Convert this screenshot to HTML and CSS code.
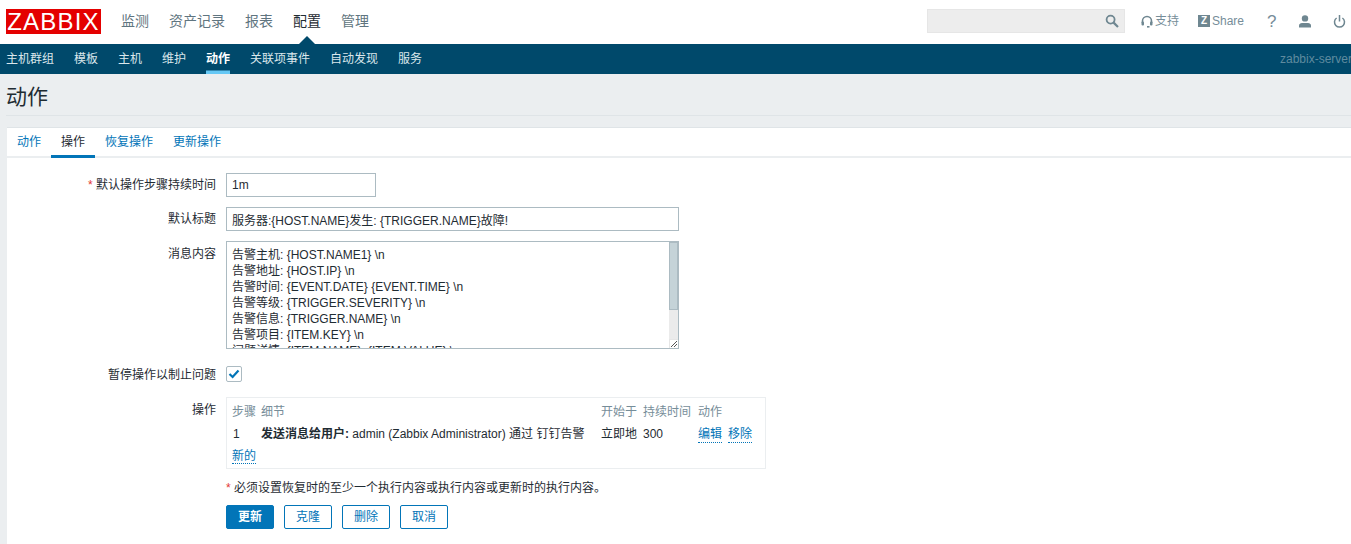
FILE: index.html
```html
<!DOCTYPE html>
<html lang="zh-CN">
<head>
<meta charset="utf-8">
<title>动作</title>
<link rel="stylesheet" href="styles.css">
</head>
<body>
<div class="page">
  <header class="topbar">
    <a class="logo">ZABBIX</a>
    <nav class="mainnav">
      <a>监测</a><a>资产记录</a><a>报表</a><a class="active">配置</a><a>管理</a>
    </nav>
    <div class="tools">
      <div class="search">
        <svg class="search-icon" width="14" height="14" viewBox="0 0 14 14"><circle cx="5.6" cy="5.6" r="4" fill="none" stroke="#6f8791" stroke-width="1.8"/><path d="M8.6 8.6 L13 13" stroke="#6f8791" stroke-width="2.2"/></svg>
      </div>
      <a class="tool support"><svg width="12" height="13" viewBox="0 0 12 13"><path d="M1.5 8 V6 a4.5 4.5 0 0 1 9 0 V8" fill="none" stroke="#6f8791" stroke-width="1.6"/><rect x="0.5" y="6.5" width="2.5" height="4" rx="1" fill="#6f8791"/><rect x="9" y="6.5" width="2.5" height="4" rx="1" fill="#6f8791"/><rect x="6" y="11" width="2.5" height="1.6" fill="#6f8791"/></svg>支持</a>
      <a class="tool share"><span class="zbox">Z</span>Share</a>
      <a class="tool help">?</a>
      <a class="tool user"><svg width="14" height="13" viewBox="0 0 14 13"><circle cx="7" cy="3.4" r="3.2" fill="#6f8791"/><path d="M1 12.5 V10.5 Q1 8.5 4 8 H10 Q13 8.5 13 10.5 V12.5 Z" fill="#6f8791"/></svg></a>
      <a class="tool power"><svg width="13" height="13" viewBox="0 0 13 13"><path d="M3.6 3 A5 5 0 1 0 9.4 3" fill="none" stroke="#6f8791" stroke-width="1.5"/><path d="M6.5 0 V6.5" stroke="#6f8791" stroke-width="1.5"/></svg></a>
    </div>
  </header>
  <nav class="subnav">
    <a>主机群组</a><a>模板</a><a>主机</a><a>维护</a><a class="active">动作</a><a>关联项事件</a><a>自动发现</a><a>服务</a>
    <span class="server">zabbix-server</span>
  </nav>
  <div class="titlebar"><h1>动作</h1></div>
  <main class="panel">
    <div class="tabs">
      <a>动作</a><a class="active">操作</a><a>恢复操作</a><a>更新操作</a>
    </div>
    <form class="form">
      <div class="row">
        <label class="label"><span class="req">*</span> 默认操作步骤持续时间</label>
        <input class="input short" type="text" value="1m">
      </div>
      <div class="row">
        <label class="label">默认标题</label>
        <input class="input wide" type="text" value="服务器:{HOST.NAME}发生: {TRIGGER.NAME}故障!">
      </div>
      <div class="row">
        <label class="label nudge">消息内容</label>
        <div class="textwrap">
          <textarea class="textarea" readonly>告警主机: {HOST.NAME1} \n
告警地址: {HOST.IP} \n
告警时间: {EVENT.DATE} {EVENT.TIME} \n
告警等级: {TRIGGER.SEVERITY} \n
告警信息: {TRIGGER.NAME} \n
告警项目: {ITEM.KEY} \n
问题详情: {ITEM.NAME}: {ITEM.VALUE} \n
当前状态: {TRIGGER.STATUS} \n
事件 ID: {EVENT.ID} \n
</textarea>
          <div class="scrolltrack"><div class="scrollthumb"></div></div>
          <div class="resizer"><svg width="8" height="8" viewBox="0 0 8 8"><path d="M1 7 L7 1 M4 7 L7 4" stroke="#555" stroke-width="1"/></svg></div>
        </div>
      </div>
      <div class="row check-row">
        <label class="label">暂停操作以制止问题</label>
        <span class="checkbox"><svg width="12" height="10" viewBox="0 0 12 10"><path d="M1.5 5 L4.6 8 L10.5 1.5" fill="none" stroke="#0275b8" stroke-width="2.2"/></svg></span>
      </div>
      <div class="row">
        <label class="label nudge">操作</label>
        <div class="ops">
          <table>
            <colgroup><col class="c1"><col class="c2"><col class="c3"><col class="c4"><col class="c5"></colgroup>
            <thead>
              <tr><th>步骤</th><th>细节</th><th>开始于</th><th>持续时间</th><th>动作</th></tr>
            </thead>
            <tbody>
              <tr>
                <td class="step">1</td>
                <td><b>发送消息给用户:</b> admin (Zabbix Administrator) 通过 钉钉告警</td>
                <td>立即地</td>
                <td>300</td>
                <td><div class="actions"><a class="dotted">编辑</a><a class="dotted">移除</a></div></td>
              </tr>
              <tr><td colspan="5"><a class="dotted">新的</a></td></tr>
            </tbody>
          </table>
        </div>
      </div>
      <div class="row">
        <span class="label"></span>
        <p class="note"><span class="req">*</span> 必须设置恢复时的至少一个执行内容或执行内容或更新时的执行内容。</p>
      </div>
      <div class="row">
        <span class="label"></span>
        <div class="buttons">
          <button type="button" class="btn primary">更新</button>
          <button type="button" class="btn">克隆</button>
          <button type="button" class="btn">删除</button>
          <button type="button" class="btn">取消</button>
        </div>
      </div>
    </form>
  </main>
</div>
</body>
</html>
```
FILE: styles.css
```css
* { box-sizing: border-box; }
html, body { margin: 0; padding: 0; height: 100%; overflow: hidden; background: #ebeef0; }
body { font: 12px/16px "Liberation Sans", "Noto Sans CJK SC", sans-serif; color: #1f2c33; }
.page { width: 1360px; height: 544px; overflow: hidden; }

.topbar { display: flex; align-items: flex-start; height: 44px; background: #fff; padding-left: 6px; width: 1351px; }
.logo { display: block; width: 95px; height: 25px; margin-top: 9px; background: #e40000; color: #fff; font-size: 24px; line-height: 25px; text-align: center; letter-spacing: 1.2px; }
.mainnav { display: flex; gap: 20px; margin-left: 20px; font-size: 14px; position: relative; }
.mainnav a { color: #5f7580; line-height: 42px; height: 44px; position: relative; }
.mainnav a.active { color: #1f2c33; }
.mainnav a.active::after { content: ""; position: absolute; left: 50%; bottom: 0; margin-left: -8px; border: 8px solid transparent; border-top: 0; border-bottom-color: #00496b; }

.tools { display: flex; align-items: center; margin-left: auto; height: 42px; }
.search { width: 198px; height: 24px; background: #ededed; border: 1px solid #e6e6e6; display: flex; align-items: center; justify-content: flex-end; padding-right: 5px; }
.tool { display: flex; align-items: center; color: #768d99; }
.tool svg { display: block; }
.support { margin-left: 16px; gap: 2px; }
.share { margin-left: 19px; }
.zbox { display: block; width: 12px; height: 12px; background: #6f8791; color: #fff; font-size: 10px; line-height: 12px; font-weight: bold; text-align: center; margin-right: 2px; }
.help { margin-left: 23px; font-size: 17px; width: 9px; padding-top: 1px; }
.user { margin-left: 22px; }
.power { margin-left: 21px; margin-right: 5px; }

.subnav { display: flex; gap: 20px; height: 30px; background: #00496b; padding: 0 8px 0 6px; line-height: 30px; }
.subnav a { color: #dbe7ec; height: 30px; }
.subnav a.active { color: #fff; font-weight: bold; box-shadow: inset 0 -3.5px 0 #66c8f5; }
.server { margin-left: auto; color: #5f8b9f; }

.titlebar { height: 42px; margin: 0 0 0 6px; border-bottom: 1px solid #dfe4e7; }
h1 { margin: 0; font-size: 21px; font-weight: normal; line-height: 46px; color: #1f2c33; }

.panel { margin: 11px 0 0 7px; height: 420px; background: #fff; border-top: 1px solid #dfe4e7; }
.tabs { display: flex; height: 30px; border-bottom: 2px solid #ebeef0; line-height: 28px; }
.tabs a { padding: 0 10px; color: #0275b8; height: 30px; }
.tabs a.active { color: #1f2c33; border-bottom: 3px solid #0275b8; height: 30px; }

.form { padding-top: 15px; }
.row { display: flex; align-items: flex-start; margin-bottom: 10px; }
.label { flex: 0 0 209px; margin-right: 10px; text-align: right; line-height: 24px; }
.label.nudge { padding-top: 1px; }
.req { color: #e33734; }
.input { height: 24px; border: 1px solid #acbbc2; padding: 0 5px; font: inherit; color: #1f2c33; background: #fff; border-radius: 0; outline: 0; }
.short { width: 150px; }
.wide { width: 453px; }
.textwrap { position: relative; width: 453px; height: 108px; }
.textarea { display: block; width: 453px; height: 108px; padding: 5px 14px 5px 5px; border: 1px solid #acbbc2; border-radius: 0; font: inherit; line-height: 16px; color: #1f2c33; resize: none; overflow: hidden; outline: 0; }
.scrolltrack { position: absolute; top: 1px; right: 1px; bottom: 10px; width: 9px; background: #ebebeb; }
.scrollthumb { height: 68px; background: #c5d3d8; border: 1px solid #acbbc2; }
.resizer { position: absolute; right: 1px; bottom: 1px; width: 9px; height: 9px; background: #fff; border-left: 1px solid #e6e6e6; border-top: 1px solid #e6e6e6; display: flex; align-items: flex-end; justify-content: flex-end; }

.check-row { height: 28px; }
.check-row .label { padding-top: 4px; line-height: 24px; }
.checkbox { display: flex; align-items: center; justify-content: center; width: 16px; height: 16px; margin-top: 7px; border: 1px solid #acbbc2; border-radius: 2px; background: #fff; }

.ops { width: 540px; height: 72px; border: 1px solid #ebeef0; padding: 3px 5px 1px; }
.ops table { border-collapse: collapse; table-layout: fixed; width: 528px; }
.ops th, .ops td { padding: 0; height: 22px; text-align: left; font-weight: normal; white-space: nowrap; }
.ops th { color: #768d99; }
.ops b { font-weight: bold; }
.ops td.step { padding-left: 1px; }
.c1 { width: 29px; } .c2 { width: 340px; } .c3 { width: 42px; } .c4 { width: 55px; } .c5 { width: 62px; }
.actions { display: flex; gap: 6px; }
.dotted { color: #0275b8; border-bottom: 1px dotted #0275b8; }

.note { margin: 1px 0 -1px; line-height: 16px; }
.buttons { display: flex; gap: 10px; }
.btn { width: 48px; height: 24px; padding: 0; border: 1px solid #0275b8; border-radius: 2px; background: #fff; color: #0275b8; font: inherit; }
.btn.primary { background: #0275b8; color: #fff; font-weight: bold; }
```
